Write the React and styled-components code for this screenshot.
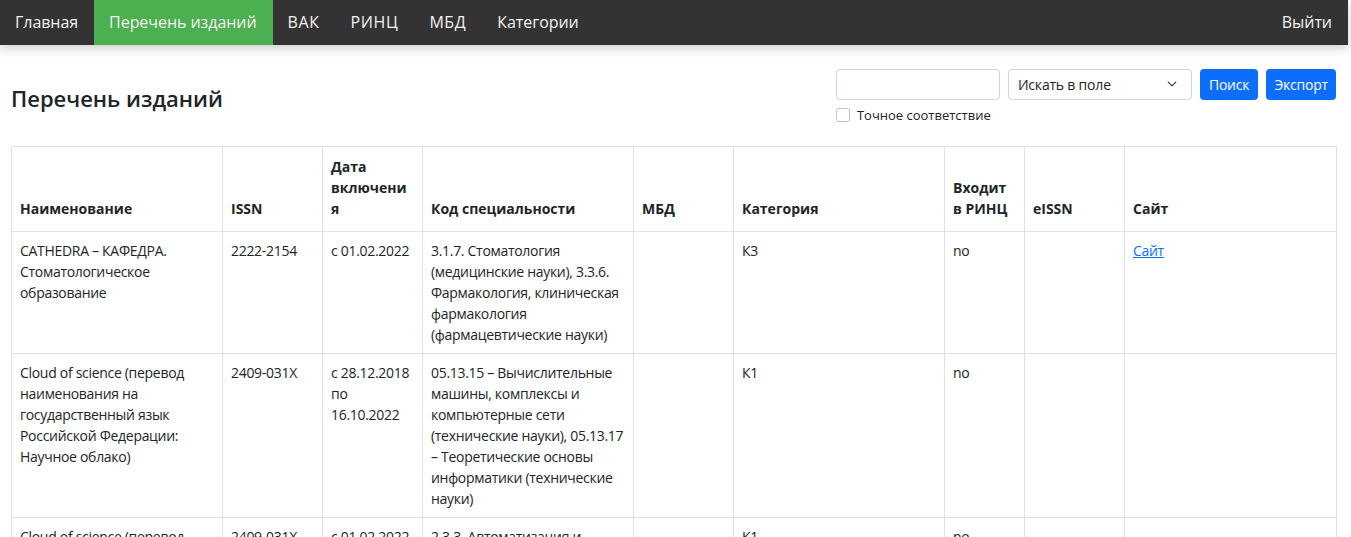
import React from 'react';
import styled, { createGlobalStyle } from 'styled-components';

const GlobalStyle = createGlobalStyle`
  body {
    margin: 0;
    background: #fff;
    color: #212529;
    font-family: "Segoe UI", "Open Sans", "Noto Sans", sans-serif;
  }
`;

const NavBar = styled.div`
  display: flex;
  align-items: stretch;
  height: 45px;
  width: 1348px;
  background-color: #333;
  box-shadow: 0 4px 10px rgba(0, 0, 0, 0.18);
`;

const NavLink = styled.a`
  display: flex;
  align-items: center;
  padding: 0 16px 2px 15px;
  font-size: 16px;
  letter-spacing: ${(props) => (props.caps ? '0.6px' : '-0.05px')};
  color: #f2f2f2;
  text-decoration: none;
  background-color: ${(props) => (props.active ? '#4caf50' : 'transparent')};
  margin-left: ${(props) => (props.right ? 'auto' : '0')};
`;

const Main = styled.div`
  width: 1325px;
  padding: 0 0 0 11px;
`;

const TopRow = styled.div`
  display: flex;
  align-items: center;
  justify-content: space-between;
  padding-top: 24px;
`;

const Title = styled.h1`
  margin: 0;
  padding-top: 4px;
  font-size: 22px;
  font-weight: 600;
  line-height: 1.2;
  color: #212529;
`;

const SearchForm = styled.form`
  display: flex;
  flex-direction: column;
  gap: 6px;
`;

const Controls = styled.div`
  display: flex;
  gap: 8px;
`;

const TextInput = styled.input`
  box-sizing: border-box;
  width: 164px;
  height: 31px;
  border: 1px solid #ced4da;
  border-radius: 4px;
  padding: 4px 8px;
  font: inherit;
  font-size: 14px;
`;

const SelectWrap = styled.div`
  position: relative;
  width: 184px;
  height: 31px;
`;

const Select = styled.select`
  box-sizing: border-box;
  width: 100%;
  height: 100%;
  appearance: none;
  border: 1px solid #ced4da;
  border-radius: 4px;
  padding: 0 30px 1px 9px;
  font: inherit;
  font-size: 14px;
  letter-spacing: -0.2px;
  color: #212529;
  background: #fff;
`;

const Chevron = styled.svg`
  position: absolute;
  right: 14px;
  top: 10px;
  pointer-events: none;
`;

const Button = styled.button`
  height: 31px;
  padding: 0 ${(props) => (props.wide ? 9 : 8)}px 1px;
  border: none;
  border-radius: 4px;
  background-color: #0d6efd;
  color: #fff;
  font: inherit;
  font-size: 14px;
  letter-spacing: -0.2px;
`;

const CheckLabel = styled.label`
  display: flex;
  align-items: center;
  gap: 7px;
  font-size: 13px;
  color: #212529;
`;

const Check = styled.input`
  appearance: none;
  margin: 0;
  width: 14px;
  height: 14px;
  border: 1px solid #bfc4c9;
  border-radius: 3px;
  background: #fff;
`;

const Table = styled.table`
  margin-top: 22px;
  width: 1325px;
  border-collapse: collapse;
  table-layout: fixed;
  font-size: 14px;
  line-height: 21px;
`;

const Th = styled.th`
  border: 1px solid #dee2e6;
  padding: 9px 8px 12px;
  text-align: left;
  vertical-align: bottom;
  font-weight: 700;
  overflow-wrap: break-word;
`;

const Td = styled.td`
  border: 1px solid #dee2e6;
  padding: 8px;
  vertical-align: top;
  letter-spacing: -0.3px;
  overflow-wrap: break-word;
`;

const SiteLink = styled.a`
  color: #0d6efd;
  text-decoration: underline;
`;

const columns = [
  { title: 'Наименование', width: 211 },
  { title: 'ISSN', width: 100 },
  { title: 'Дата включения', width: 100 },
  { title: 'Код специальности', width: 211 },
  { title: 'МБД', width: 100 },
  { title: 'Категория', width: 211 },
  { title: 'Входит в РИНЦ', width: 80 },
  { title: 'eISSN', width: 100 },
  { title: 'Сайт', width: 212 },
];

const rows = [
  {
    name: 'CATHEDRA – КАФЕДРА. Стоматологическое образование',
    issn: '2222-2154',
    date: 'с 01.02.2022',
    code: '3.1.7. Стоматология (медицинские науки), 3.3.6. Фармакология, клиническая фармакология (фармацевтические науки)',
    cat: 'К3',
    rinc: 'no',
    site: true,
  },
  {
    name: 'Cloud of science (перевод наименования на государственный язык Российской Федерации: Научное облако)',
    issn: '2409-031X',
    date: 'с 28.12.2018 по 16.10.2022',
    code: '05.13.15 – Вычислительные машины, комплексы и компьютерные сети (технические науки), 05.13.17 – Теоретические основы информатики (технические науки)',
    cat: 'К1',
    rinc: 'no',
    site: false,
  },
  {
    name: 'Cloud of science (перевод наименования на государственный язык Российской Федерации: Научное облако)',
    issn: '2409-031X',
    date: 'с 01.02.2022',
    code: '2.3.3. Автоматизация и управление технологическими процессами и производствами (технические науки)',
    cat: 'К1',
    rinc: 'no',
    site: false,
  },
];

export default function App() {
  return (
    <>
      <GlobalStyle />
      <NavBar>
        <NavLink href="#">Главная</NavLink>
        <NavLink href="#" active>Перечень изданий</NavLink>
        <NavLink href="#" caps>ВАК</NavLink>
        <NavLink href="#" caps>РИНЦ</NavLink>
        <NavLink href="#" caps>МБД</NavLink>
        <NavLink href="#">Категории</NavLink>
        <NavLink href="#" right>Выйти</NavLink>
      </NavBar>

      <Main>
        <TopRow>
          <Title>Перечень изданий</Title>
          <SearchForm onSubmit={(e) => e.preventDefault()}>
            <Controls>
              <TextInput type="text" />
              <SelectWrap>
                <Select defaultValue="">
                  <option value="">Искать в поле</option>
                </Select>
                <Chevron width="12" height="10" viewBox="0 0 16 16">
                  <path d="M2 5l6 6 6-6" fill="none" stroke="#343a40" strokeWidth="2" strokeLinecap="round" strokeLinejoin="round" />
                </Chevron>
              </SelectWrap>
              <Button type="submit" wide>Поиск</Button>
              <Button type="button">Экспорт</Button>
            </Controls>
            <CheckLabel>
              <Check type="checkbox" />
              Точное соответствие
            </CheckLabel>
          </SearchForm>
        </TopRow>

        <Table>
          <colgroup>
            {columns.map((c) => (
              <col key={c.title} style={{ width: c.width }} />
            ))}
          </colgroup>
          <thead>
            <tr>
              {columns.map((c) => (
                <Th key={c.title}>{c.title}</Th>
              ))}
            </tr>
          </thead>
          <tbody>
            {rows.map((r, i) => (
              <tr key={i}>
                <Td>{r.name}</Td>
                <Td>{r.issn}</Td>
                <Td>{r.date}</Td>
                <Td>{r.code}</Td>
                <Td></Td>
                <Td>{r.cat}</Td>
                <Td>{r.rinc}</Td>
                <Td></Td>
                <Td>{r.site && <SiteLink href="#">Сайт</SiteLink>}</Td>
              </tr>
            ))}
          </tbody>
        </Table>
      </Main>
    </>
  );
}
